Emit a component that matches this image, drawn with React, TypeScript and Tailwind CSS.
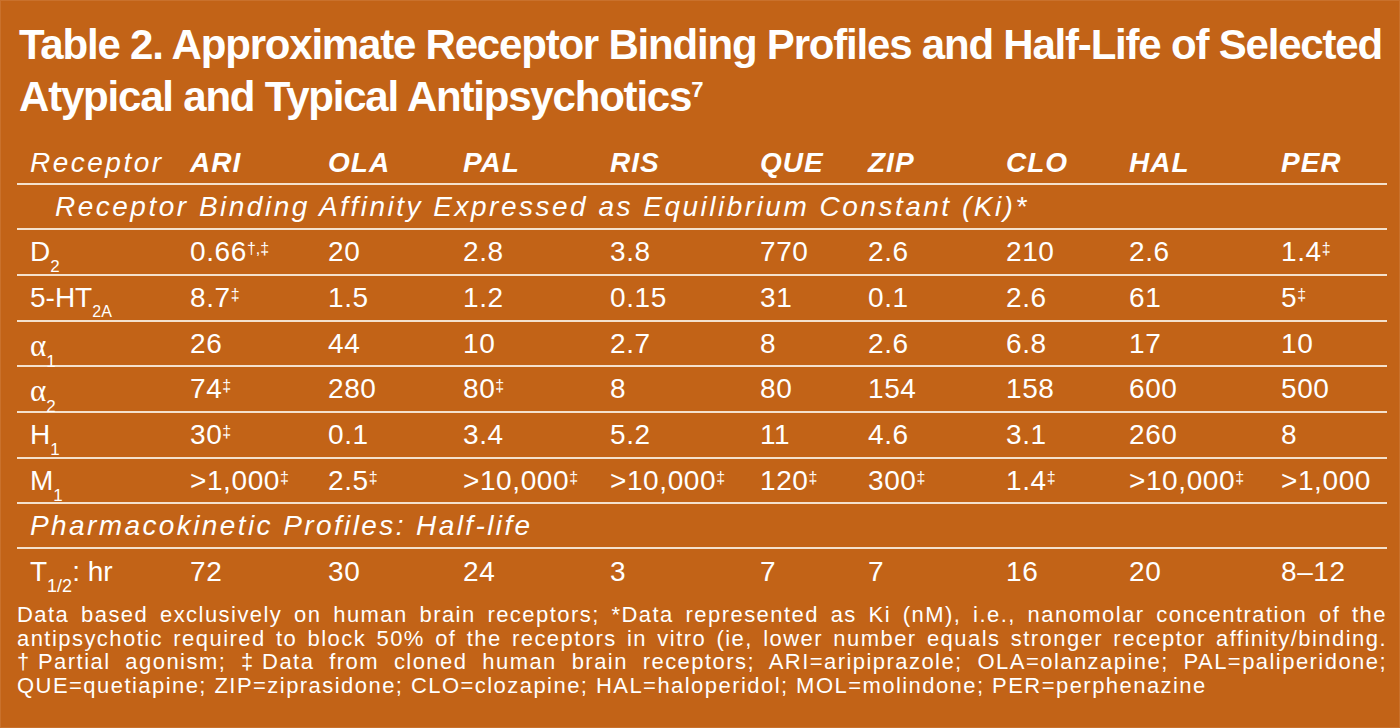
import React from "react";

type Cell = { v: string; s?: string };

const drugs = ["ARI", "OLA", "PAL", "RIS", "QUE", "ZIP", "CLO", "HAL", "PER"];

const c = (v: string, s?: string): Cell => ({ v, s });

const affinity: { label: React.ReactNode; h: string; cells: Cell[] }[] = [
  {
    label: (
      <>
        D<span className="align-[-11px] text-[17px] leading-none">2</span>
      </>
    ),
    h: "h-[46px]",
    cells: [c("0.66", "†,‡"), c("20"), c("2.8"), c("3.8"), c("770"), c("2.6"), c("210"), c("2.6"), c("1.4", "‡")],
  },
  {
    label: (
      <>
        5-HT<span className="align-[-10px] text-[16px] leading-none">2A</span>
      </>
    ),
    h: "h-[46px]",
    cells: [c("8.7", "‡"), c("1.5"), c("1.2"), c("0.15"), c("31"), c("0.1"), c("2.6"), c("61"), c("5", "‡")],
  },
  {
    label: (
      <>
        <span className="font-['Liberation_Serif',serif] text-[31px]">α</span>
        <span className="align-[-11px] text-[17px] leading-none">1</span>
      </>
    ),
    h: "h-[45px]",
    cells: [c("26"), c("44"), c("10"), c("2.7"), c("8"), c("2.6"), c("6.8"), c("17"), c("10")],
  },
  {
    label: (
      <>
        <span className="font-['Liberation_Serif',serif] text-[31px]">α</span>
        <span className="align-[-11px] text-[17px] leading-none">2</span>
      </>
    ),
    h: "h-[46px]",
    cells: [c("74", "‡"), c("280"), c("80", "‡"), c("8"), c("80"), c("154"), c("158"), c("600"), c("500")],
  },
  {
    label: (
      <>
        H<span className="align-[-11px] text-[17px] leading-none">1</span>
      </>
    ),
    h: "h-[46px]",
    cells: [c("30", "‡"), c("0.1"), c("3.4"), c("5.2"), c("11"), c("4.6"), c("3.1"), c("260"), c("8")],
  },
  {
    label: (
      <>
        M<span className="align-[-11px] text-[17px] leading-none">1</span>
      </>
    ),
    h: "h-[45px]",
    cells: [
      c(">1,000", "‡"),
      c("2.5", "‡"),
      c(">10,000", "‡"),
      c(">10,000", "‡"),
      c("120", "‡"),
      c("300", "‡"),
      c("1.4", "‡"),
      c(">10,000", "‡"),
      c(">1,000"),
    ],
  },
];

const halfLife = ["72", "30", "24", "3", "7", "7", "16", "20", "8–12"];

const gridCols =
  "grid grid-cols-[160px_138px_135px_147px_150px_108px_138px_123px_152px_1fr] pl-[13px]";

function Value({ cell }: { cell: Cell }) {
  return (
    <div className="whitespace-nowrap tracking-[0.6px]">
      {cell.v}
      {cell.s && (
        <span className="align-[7px] text-[16px] leading-none tracking-normal">{cell.s}</span>
      )}
    </div>
  );
}

export default function App() {
  return (
    <div className="h-[728px] w-[1400px] overflow-hidden border border-[#c9712c] bg-[#c26317] font-['Liberation_Sans',Arial,sans-serif] text-white">
      {/* Titel */}
      <h1 className="pl-[18px] pt-[18px] text-[42px] font-bold leading-[52px] tracking-[-1.2px]">
        Table 2. Approximate Receptor Binding Profiles and Half-Life of Selected
        <br />
        Atypical and Typical Antipsychotics
        <span className="align-[14px] text-[22px] leading-none tracking-normal">7</span>
      </h1>

      <div className="ml-[16px] w-[1370px] text-[28px] leading-none">
        {/* Kolomkoppen */}
        <div className={`${gridCols} mt-[26px] h-[36px] border-b-2 border-[#f4e1cd]`}>
          <div className="italic tracking-[2.5px]">Receptor</div>
          {drugs.map((d) => (
            <div key={d} className="font-bold italic tracking-[1px]">
              {d}
            </div>
          ))}
        </div>

        {/* Affiniteit */}
        <div className="h-[45px] border-b-2 border-[#f4e1cd] pl-[38px] pt-2 italic tracking-[2.5px]">
          Receptor Binding Affinity Expressed as Equilibrium Constant (Ki)*
        </div>

        {affinity.map((row, i) => (
          <div key={i} className={`${gridCols} ${row.h} border-b-2 border-[#f4e1cd] pt-2`}>
            <div className="whitespace-nowrap">{row.label}</div>
            {row.cells.map((cell, j) => (
              <Value key={j} cell={cell} />
            ))}
          </div>
        ))}

        {/* Halfwaardetijd */}
        <div className="h-[45px] border-b-2 border-[#f4e1cd] pl-[13px] pt-2 italic tracking-[2.4px]">
          Pharmacokinetic Profiles: Half-life
        </div>
        <div className={`${gridCols} h-[54px] pt-[9px]`}>
          <div className="whitespace-nowrap">
            T<span className="align-[-11px] text-[18px] leading-none">1/2</span>: hr
          </div>
          {halfLife.map((v, j) => (
            <Value key={j} cell={{ v }} />
          ))}
        </div>

        {/* Voetnoot */}
        <div className="text-[22px] leading-[23.7px] tracking-[1.45px]">
          <div className="text-justify [text-align-last:justify]">
            Data based exclusively on human brain receptors; *Data represented as Ki (nM), i.e., nanomolar concentration of the
          </div>
          <div className="text-justify [text-align-last:justify]">
            antipsychotic required to block 50% of the receptors in vitro (ie, lower number equals stronger receptor affinity/binding.
          </div>
          <div className="text-justify [text-align-last:justify]">
            †Partial agonism; ‡Data from cloned human brain receptors; ARI=aripiprazole; OLA=olanzapine; PAL=paliperidone;
          </div>
          <div>QUE=quetiapine; ZIP=ziprasidone; CLO=clozapine; HAL=haloperidol; MOL=molindone; PER=perphenazine</div>
        </div>
      </div>
    </div>
  );
}
